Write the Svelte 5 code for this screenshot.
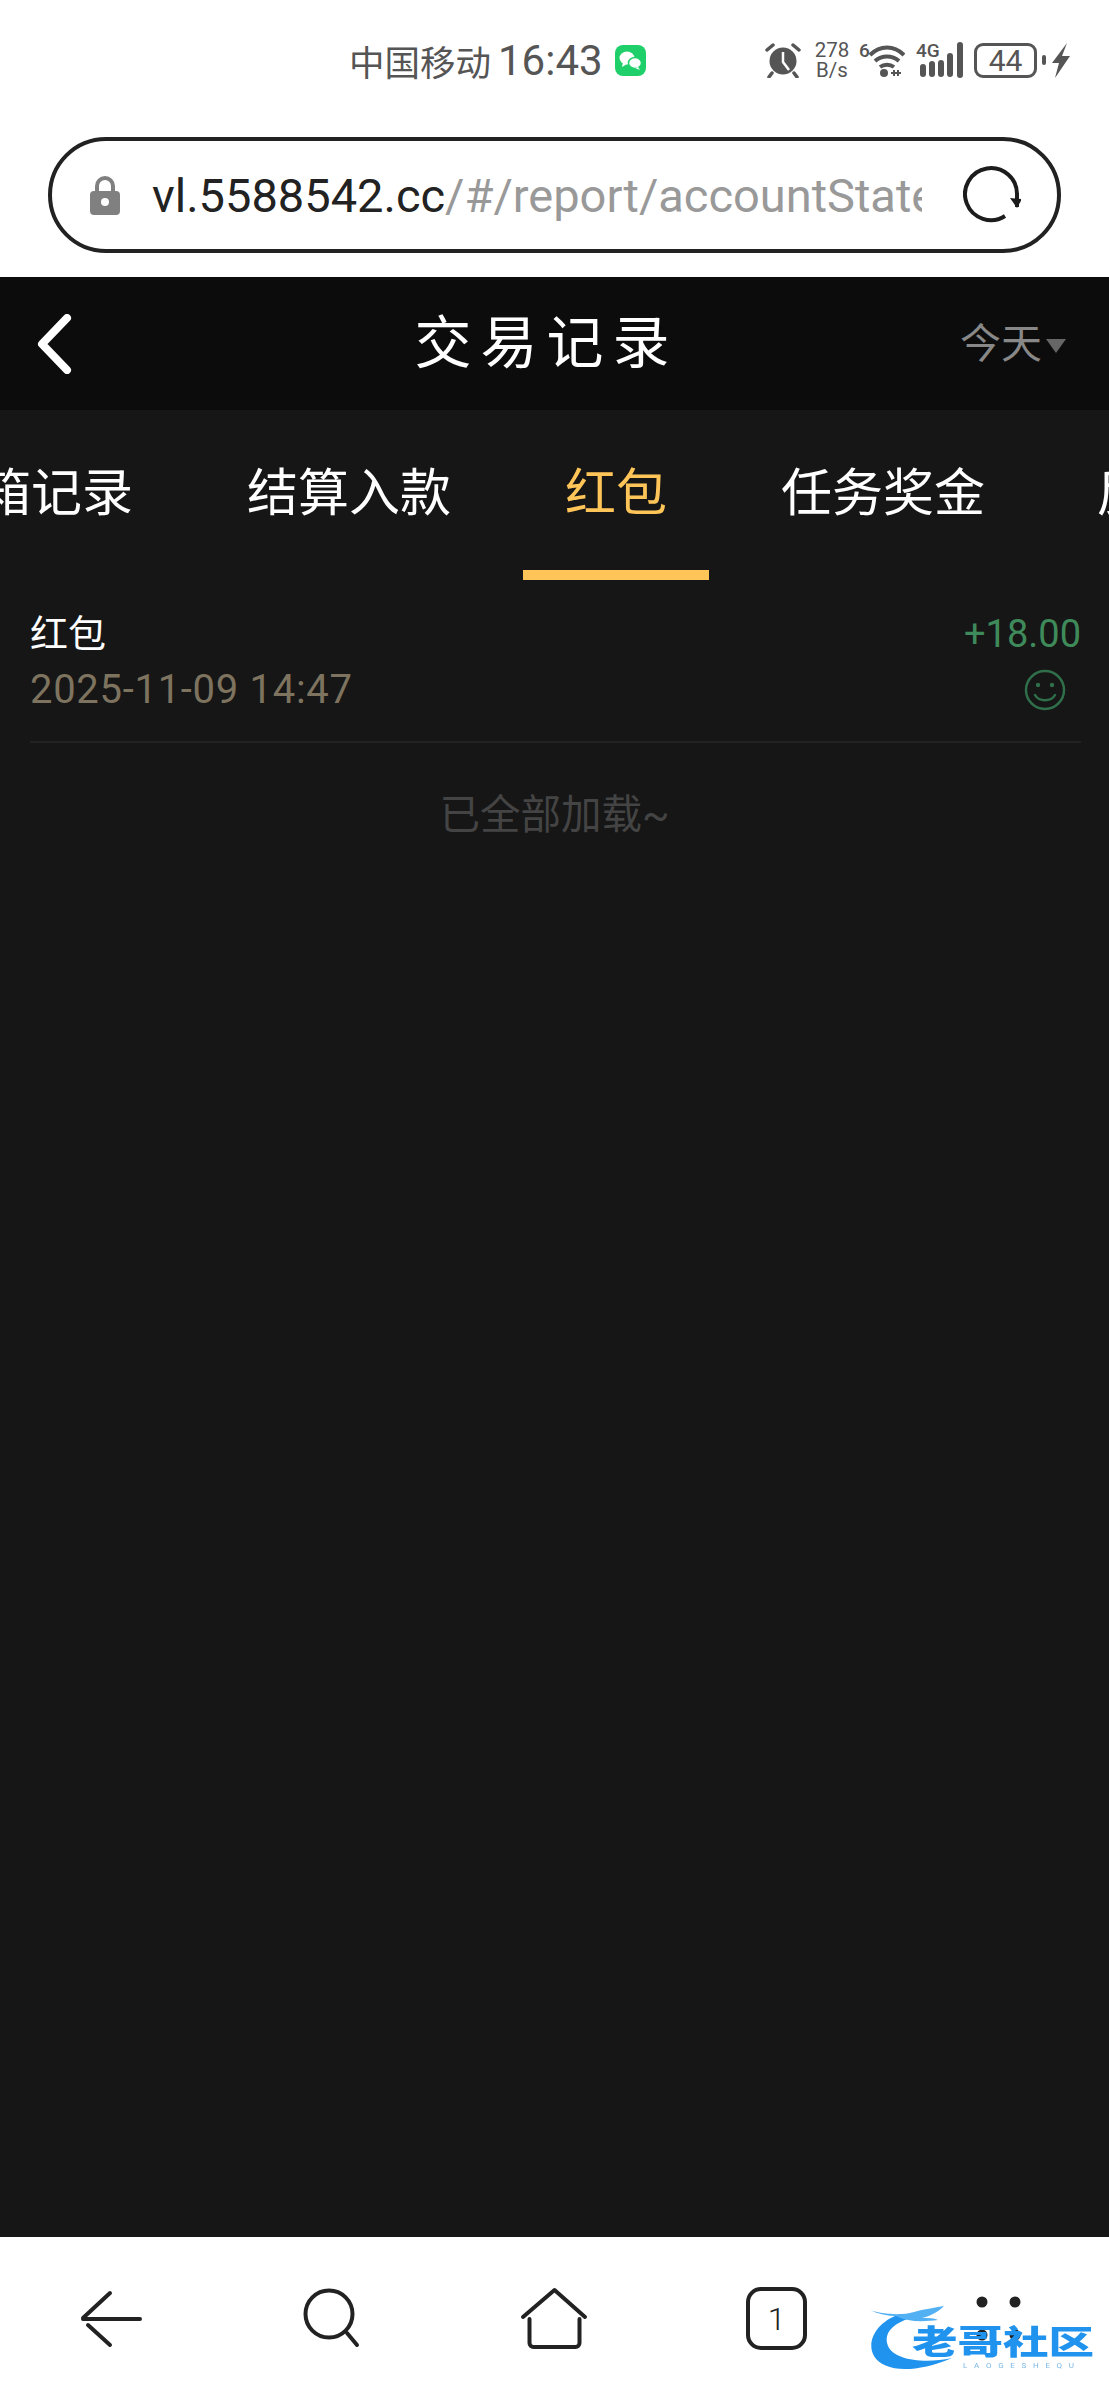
<script>
  const tabs = ["保险箱记录", "结算入款", "红包", "任务奖金", "反水记录"]
  const active = "红包"
</script>

<div class="page">
  <header class="status">
    <span class="carrier">中国移动</span>
    <span class="clock">16:43</span>
    <svg class="wechat" width="31" height="31" viewBox="0 0 31 31">
      <rect width="31" height="31" rx="8" fill="#1fd06a" />
      <ellipse cx="12" cy="13" rx="7.5" ry="6.5" fill="#fff" />
      <path d="M8 17l-1 5 5-3z" fill="#fff" />
      <ellipse cx="20" cy="18" rx="6.5" ry="5.5" fill="#fff" stroke="#1fd06a" stroke-width="1.5" />
      <path d="M23 22l2 3-5-2z" fill="#fff" />
    </svg>
    <div class="sys">
      <svg class="alarm" width="36" height="36" viewBox="0 0 36 36">
        <circle cx="18" cy="19" r="13.5" fill="#555" />
        <path d="M18 10v10l6 8" fill="none" stroke="#fff" stroke-width="2.5" />
        <path d="M2 8l6-5M34 8l-6-5M7 31l-3 4M29 31l3 4" stroke="#555" stroke-width="3.5" stroke-linecap="round" />
      </svg>
      <div class="speed"><span>278</span><span>B/s</span></div>
      <svg class="wifi" width="46" height="36" viewBox="0 0 46 36">
        <text x="0" y="15" class="mini">6</text>
        <path d="M11 13C21 3 35 3 45 13M16 19c7-6 17-6 24 0M21 25c4-3 10-3 14 0" fill="none" stroke="#555" stroke-width="4" />
        <circle cx="25" cy="31" r="4" fill="#555" />
        <path d="M32 31h10M35 28v6M39 28v6" stroke="#555" stroke-width="2" />
      </svg>
      <svg class="signal" width="50" height="36" viewBox="0 0 50 36">
        <text x="0" y="15" class="mini">4G</text>
        <path d="M7 25v7M16 22v10M25 21v11M34 14v18M44 3v30" stroke="#555" stroke-width="6" stroke-linecap="round" />
      </svg>
      <div class="battery">44</div>
      <span class="nub"></span>
      <svg class="bolt" width="18" height="35" viewBox="0 0 18 35">
        <path d="M15 0L0 20h7L3 35l15-22h-8z" fill="#555" />
      </svg>
    </div>
  </header>

  <div class="urlwrap">
    <div class="urlbar">
      <svg class="lock" width="30" height="39" viewBox="0 0 30 39">
        <path d="M7 17V10a8 8 0 0 1 16 0v7" fill="none" stroke="#808080" stroke-width="4" />
        <rect x="0" y="15" width="30" height="24" rx="4" fill="#808080" />
        <circle cx="15" cy="26" r="4" fill="#fff" />
      </svg>
      <div class="url"><span class="host">vl.5588542.cc</span><span class="path">/#/report/accountStatement</span></div>
      <svg class="reload" width="58" height="58" viewBox="0 0 58 58">
        <path d="M42 50A26 26 0 1 1 54 29v12" fill="none" stroke="#1c1c1c" stroke-width="4" />
        <path d="M47 32l7 10 5-9z" fill="#1c1c1c" />
      </svg>
    </div>
  </div>

  <div class="topbar">
    <svg class="back" width="36" height="60" viewBox="0 0 36 60">
      <path d="M31 4L6 30l25 26" fill="none" stroke="#fff" stroke-width="8" stroke-linecap="round" stroke-linejoin="round" />
    </svg>
    <h1>交易记录</h1>
    <div class="range">今天<span class="caret"></span></div>
  </div>

  <main>
    <nav class="tabs">
      {#each tabs as tab}
        <span class="tab" class:active={tab === active}>{tab}</span>
      {/each}
    </nav>

    <div class="row">
      <div class="left">
        <div class="name">红包</div>
        <div class="date">2025-11-09 14:47</div>
      </div>
      <div class="right">
        <div class="amount">+18.00</div>
        <svg class="smile" width="42" height="42" viewBox="0 0 42 42">
          <circle cx="21" cy="21" r="19" fill="none" stroke="#2f6f4a" stroke-width="2.5" />
          <circle cx="14" cy="16" r="2.2" fill="#2f6f4a" />
          <circle cx="28" cy="16" r="2.2" fill="#2f6f4a" />
          <path d="M11 26c4 7 16 7 20 0" fill="none" stroke="#2f6f4a" stroke-width="2.5" stroke-linecap="round" />
        </svg>
      </div>
    </div>

    <p class="done">已全部加载~</p>
  </main>

  <footer class="bottom">
    <svg width="80" height="80" viewBox="0 0 80 80" class="ico">
      <path d="M39 14L12 39M12 40h57M17 46l22 20" />
    </svg>
    <svg width="80" height="80" viewBox="0 0 80 80" class="ico">
      <circle cx="36" cy="35" r="23.5" />
      <path d="M54 54l10 12" />
    </svg>
    <svg width="80" height="80" viewBox="0 0 80 80" class="ico">
      <path d="M9 38L40.500 11 71 38M15.500 40v24a4 4 0 0 0 4 4h42a4 4 0 0 0 4-4V40" />
    </svg>
    <svg width="80" height="80" viewBox="0 0 80 80" class="ico">
      <rect x="12" y="10" width="57" height="59" rx="13" />
      <text x="40.500" y="51" class="tabcount">1</text>
    </svg>
    <svg width="80" height="80" viewBox="0 0 80 80" class="dots">
      <circle cx="24" cy="23" r="5.500" />
      <circle cx="57" cy="23" r="5.500" />
      <circle cx="24" cy="56" r="5.500" />
      <circle cx="57" cy="56" r="5.500" />
    </svg>

    <svg class="logo" width="228" height="72" viewBox="0 0 228 72">
      <path d="M32 10C8 18-2 38 6 52c9 15 38 19 78 2C56 60 26 56 20 42 15 30 24 20 42 14z" fill="#1f93ee" />
      <path d="M2 6c12 4 30 6 44 2 10-3 20-4 30-6-6 6-14 10-22 12 6 0 12 0 16 2-16 2-30 2-42-4C20 12 10 10 2 6z" fill="#53b0f3" />
      <text x="44" y="50" class="brand" textLength="182" lengthAdjust="spacingAndGlyphs">老哥社区</text>
      <text x="95" y="64" class="brand-sub" textLength="111">LAOGESHEQU</text>
    </svg>
  </footer>
</div>

<style>
  :global(body) {
    margin: 0;
    background: #fff;
  }

  .page {
    width: 1109px;
    height: 2400px;
    display: flex;
    flex-direction: column;
    font-family: Roboto, "Noto Sans CJK SC", sans-serif;
    overflow: hidden;
  }

  .status {
    height: 120px;
    flex-shrink: 0;
    box-sizing: border-box;
    display: flex;
    align-items: center;
    padding: 0 39px 0 349px;
    color: #555;
  }
  .carrier {
    font-size: 35.500px;
    font-family: "Noto Sans CJK SC", sans-serif;
  }
  .clock {
    margin-left: 7px;
    font-size: 42px;
  }
  .wechat {
    margin-left: 12px;
  }
  .sys {
    margin-left: auto;
    display: flex;
    align-items: center;
  }
  .alarm {
    margin-right: -1px;
  }
  .speed {
    margin-left: 14px;
    width: 36px;
    display: flex;
    flex-direction: column;
    font-size: 20.500px;
    line-height: 20.500px;
    text-align: center;
  }
  .wifi {
    margin-left: 9px;
  }
  .signal {
    margin-left: 11px;
  }
  .mini {
    font-size: 19px;
    font-weight: 500;
    fill: #555;
  }
  .battery {
    margin-left: 8px;
    width: 63px;
    height: 35px;
    box-sizing: border-box;
    border: 3px solid #555;
    border-radius: 9px;
    font-size: 30px;
    line-height: 29px;
    text-align: center;
  }
  .nub {
    margin-left: 5px;
    width: 4px;
    height: 10px;
    background: #555;
    border-radius: 2px;
  }
  .bolt {
    margin-left: 6px;
  }

  .urlwrap {
    flex-shrink: 0;
    padding: 17px 48px 24px;
  }
  .urlbar {
    height: 116px;
    box-sizing: border-box;
    border: 4px solid #222;
    border-radius: 58px;
    display: flex;
    align-items: center;
    padding: 0 36px 0 38px;
  }
  .lock {
    flex-shrink: 0;
  }
  .url {
    margin-left: 32px;
    width: 770px;
    overflow: hidden;
    white-space: nowrap;
    font-size: 47px;
  }
  .host {
    color: #222;
  }
  .path {
    color: #999;
  }
  .reload {
    margin-left: auto;
    flex-shrink: 0;
  }

  .topbar {
    height: 133px;
    flex-shrink: 0;
    box-sizing: border-box;
    background: #0c0c0c;
    display: grid;
    grid-template-columns: 1fr auto 1fr;
    align-items: center;
    padding: 0 43px 0 36px;
  }
  h1 {
    margin: 0 9px 0 0;
    color: #fff;
    font-size: 57px;
    font-weight: 400;
    letter-spacing: 9px;
    line-height: 1;
  }
  .range {
    justify-self: end;
    display: flex;
    align-items: center;
    gap: 4px;
    margin-bottom: 8px;
    color: #888;
    font-size: 41px;
  }
  .caret {
    margin-top: 12px;
    border-left: 10px solid transparent;
    border-right: 10px solid transparent;
    border-top: 14px solid #666;
  }

  main {
    flex: 1;
    background: #161616;
  }
  .tabs {
    height: 170px;
    box-sizing: border-box;
    display: flex;
    gap: 30px;
    margin-left: -164px;
    overflow: hidden;
    width: 1400px;
  }
  .tab {
    flex-shrink: 0;
    box-sizing: border-box;
    height: 170px;
    padding: 58px 42px 0;
    border-bottom: 10px solid transparent;
    color: #fff;
    font-size: 51px;
    line-height: 52px;
  }
  .tab:last-child {
    margin-left: -3px;
  }
  .tab.active {
    color: #ffc558;
    border-bottom-color: #ffc558;
  }

  .row {
    margin: 0 28px 0 30px;
    padding: 27px 0 24px;
    border-bottom: 2px solid #222;
    display: flex;
    justify-content: space-between;
  }
  .left {
    display: flex;
    flex-direction: column;
  }
  .name {
    color: #fff;
    font-size: 38px;
    line-height: 55px;
  }
  .date {
    color: #7d735f;
    font-size: 40px;
    line-height: 55px;
    letter-spacing: 0.7px;
  }
  .right {
    display: flex;
    flex-direction: column;
    align-items: flex-end;
  }
  .amount {
    color: #3f8a5a;
    font-size: 38px;
    line-height: 55px;
  }
  .smile {
    margin: 7px 15px 0 0;
  }
  .done {
    margin: 42px 0 0;
    text-align: center;
    color: #444;
    font-size: 40.500px;
    line-height: 60px;
  }

  .bottom {
    position: relative;
    height: 163px;
    flex-shrink: 0;
    display: grid;
    grid-template-columns: repeat(5, 1fr);
    align-items: center;
    justify-items: center;
    background: #fff;
  }
  .ico {
    fill: none;
    stroke: #222;
    stroke-width: 4;
    stroke-linecap: round;
    stroke-linejoin: round;
  }
  .tabcount {
    font-size: 32px;
    font-weight: 300;
    text-anchor: middle;
    fill: #222;
    stroke: none;
  }
  .dots {
    fill: #222;
  }
  .logo {
    position: absolute;
    left: 868px;
    top: 67px;
    filter: blur(0.6px);
  }
  .brand {
    font-size: 33px;
    font-weight: 900;
    font-family: "Noto Sans CJK SC", sans-serif;
    fill: #1f93ee;
  }
  .brand-sub {
    font-size: 8px;
    fill: #7ab9ea;
    font-family: Roboto, sans-serif;
  }
</style>
